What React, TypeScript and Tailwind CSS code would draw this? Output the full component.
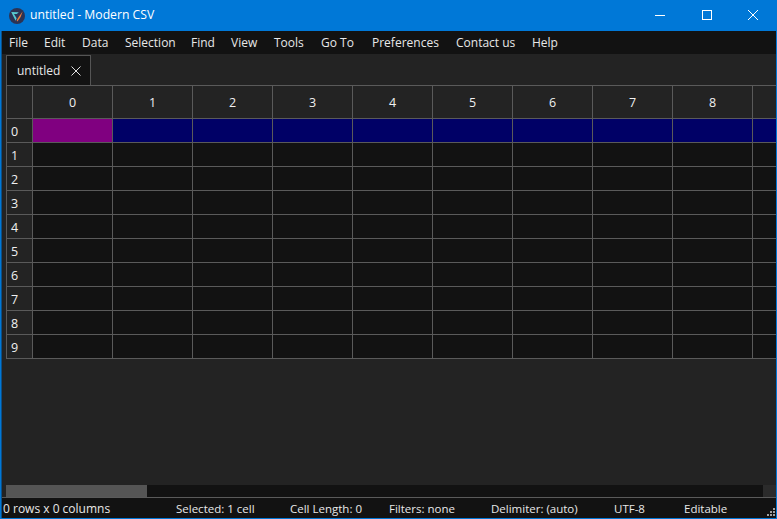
const cols = [0, 1, 2, 3, 4, 5, 6, 7, 8];
const rows = [0, 1, 2, 3, 4, 5, 6, 7, 8, 9];
const menus = [
  ["File", "w-[35px]"],
  ["Edit", "w-[38px]"],
  ["Data", "w-[43px]"],
  ["Selection", "w-[66px]"],
  ["Find", "w-[40px]"],
  ["View", "w-[43px]"],
  ["Tools", "w-[47px]"],
  ["Go To", "w-[51px]"],
  ["Preferences", "w-[84px]"],
  ["Contact us", "w-[76px]"],
  ["Help", "w-[40px]"],
];

function Logo() {
  return (
    <svg width="16" height="16" viewBox="0 0 16 16">
      <circle cx="8" cy="8" r="8" fill="#2c3354" />
      <path d="M2.2 4 L9.8 4.2 L7.8 6 L5 5.9 L7.6 10.2 L6.6 12.8 Z" fill="#57c9cf" />
      <path d="M13.6 3.4 L11.6 9 L8.4 13.6 L7.7 12.2 L10 8.6 Z" fill="#ee7f3c" />
    </svg>
  );
}

export default function App() {
  return (
    <div
      className="flex h-[519px] w-[777px] flex-col overflow-hidden bg-[#0078d7] text-[#e8e8e8]"
      style={{ fontFamily: '"Open Sans", "Noto Sans", sans-serif' }}
    >
      <div className="flex h-[31px] shrink-0 items-center text-white">
        <div className="ml-[9px] mr-[5px] mt-px flex items-center"><Logo /></div>
        <span className="text-[12.2px]">untitled - Modern CSV</span>
        <div className="ml-auto mr-px flex items-center">
          <svg width="46" height="31" viewBox="0 0 46 31">
            <path d="M17 15.5 H27" stroke="#fff" strokeWidth="1" />
          </svg>
          <svg width="46" height="31" viewBox="0 0 46 31">
            <rect x="18.5" y="10.5" width="9" height="9" fill="none" stroke="#fff" strokeWidth="1" />
          </svg>
          <svg width="46" height="31" viewBox="0 0 46 31">
            <path d="M18 10 L28 20 M28 10 L18 20" stroke="#fff" strokeWidth="1" />
          </svg>
        </div>
      </div>

      <div className="mx-px mb-px flex min-h-0 flex-1 flex-col border-l border-[#0c4f86]">
        <div className="flex h-[23px] shrink-0 items-center bg-[#121212] pl-[7px] text-[12px]">
          {menus.map(([m, w]) => (
            <span key={m} className={w}>{m}</span>
          ))}
        </div>

        <div className="flex min-h-0 flex-1 flex-col bg-[#232323] pl-[4px]">
          <div className="flex h-[31px] shrink-0 items-end pt-px">
            <div className="flex h-[30px] w-[85px] items-center border border-b-0 border-[#555] bg-[#121212] pl-[10px] text-[12px]">
              <span>untitled</span>
              <svg width="10" height="10" viewBox="0 0 10 10" className="ml-[11px]">
                <path d="M0.5 0.5 L9.5 9.5 M9.5 0.5 L0.5 9.5" stroke="#e0e0e0" strokeWidth="1" />
              </svg>
            </div>
          </div>

          <div className="shrink-0 overflow-hidden text-[12.5px] text-[#f0f0f0]">
            <div className="flex h-[34px] border-y border-[#5a5a5a] bg-[#232323]">
              <div className="w-[27px] shrink-0 border-x border-[#5a5a5a]" />
              {cols.map((c) => (
                <div key={c} className="flex w-[80px] shrink-0 items-center justify-center border-r border-[#5a5a5a] pt-[3px]">{c}</div>
              ))}
            </div>
            {rows.map((r) => (
              <div key={r} className="flex h-[24px] border-b border-[#5a5a5a] bg-[#121212]">
                <div className="flex w-[27px] shrink-0 items-center border-x border-[#5a5a5a] bg-[#232323] pl-[4px] pt-[3px]">{r}</div>
                {cols.map((c) => {
                  const bg = r !== 0 ? "" : c === 0 ? "bg-[#800080]" : "bg-[#000066]";
                  return <div key={c} className={`w-[80px] shrink-0 border-r border-[#5a5a5a] ${bg}`} />;
                })}
                <div className={`flex-1 ${r === 0 ? "bg-[#000066]" : ""}`} />
              </div>
            ))}
          </div>

          <div className="min-h-0 flex-1" />

          <div className="flex h-[12px] shrink-0">
            <div className="w-[141px] bg-[#555555]" />
            <div className="flex-1 bg-[#121212]" />
            <div className="w-[13px] bg-[#2b2b2b]" />
          </div>
        </div>

        <div className="flex h-[21px] shrink-0 items-center border-t border-[#5a5a5a] bg-[#121212] pl-[1px] pt-px text-[11.5px]">
          <span className="w-[173px] text-[12px]">0 rows x 0 columns</span>
          <span className="w-[114px]">Selected: 1 cell</span>
          <span className="w-[99px]">Cell Length: 0</span>
          <span className="w-[102px]">Filters: none</span>
          <span className="w-[123px]">Delimiter: (auto)</span>
          <span className="w-[70px]">UTF-8</span>
          <span className="w-[70px]">Editable</span>
          <svg width="8" height="8" viewBox="0 0 8 8" className="mb-[2px] ml-auto mr-px self-end">
            <g fill="#a0a0a0">
              <rect x="6" y="0" width="2" height="2" />
              <rect x="3" y="3" width="2" height="2" />
              <rect x="6" y="3" width="2" height="2" />
              <rect x="0" y="6" width="2" height="2" />
              <rect x="3" y="6" width="2" height="2" />
              <rect x="6" y="6" width="2" height="2" />
            </g>
          </svg>
        </div>
      </div>
    </div>
  );
}
